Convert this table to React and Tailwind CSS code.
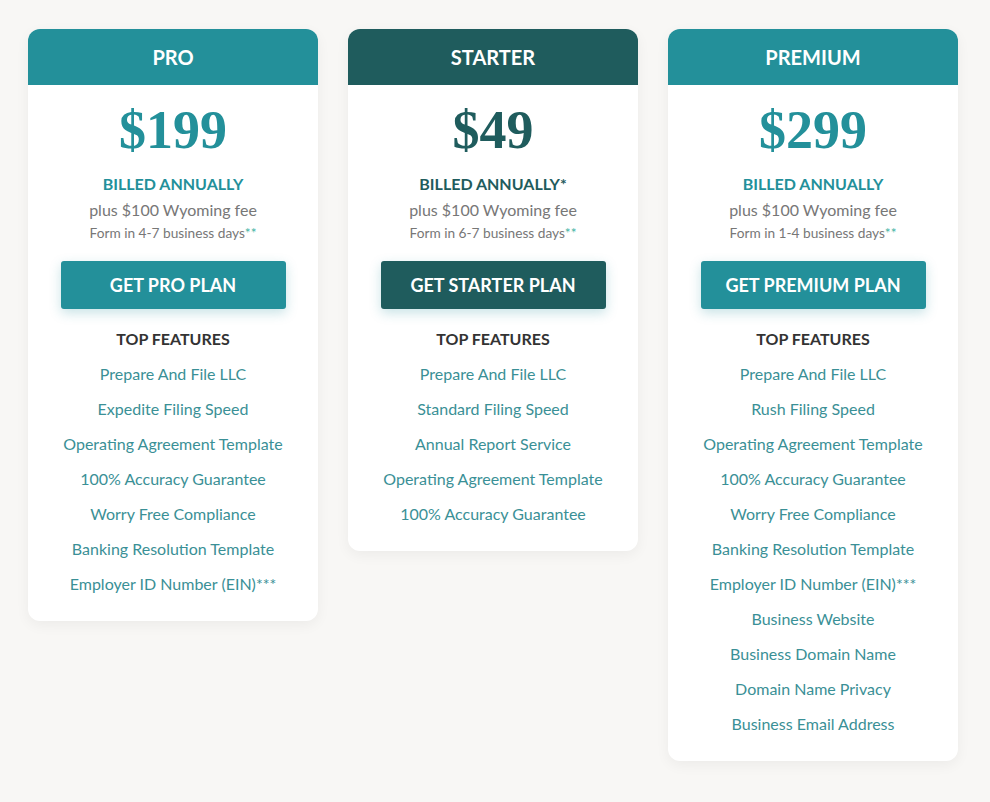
const plans = [
  {
    name: "PRO",
    price: "$199",
    dark: false,
    star: false,
    days: "4-7",
    button: "GET PRO PLAN",
    features: [
      "Prepare And File LLC",
      "Expedite Filing Speed",
      "Operating Agreement Template",
      "100% Accuracy Guarantee",
      "Worry Free Compliance",
      "Banking Resolution Template",
      "Employer ID Number (EIN)***",
    ],
  },
  {
    name: "STARTER",
    price: "$49",
    dark: true,
    star: true,
    days: "6-7",
    button: "GET STARTER PLAN",
    features: [
      "Prepare And File LLC",
      "Standard Filing Speed",
      "Annual Report Service",
      "Operating Agreement Template",
      "100% Accuracy Guarantee",
    ],
  },
  {
    name: "PREMIUM",
    price: "$299",
    dark: false,
    star: false,
    days: "1-4",
    button: "GET PREMIUM PLAN",
    features: [
      "Prepare And File LLC",
      "Rush Filing Speed",
      "Operating Agreement Template",
      "100% Accuracy Guarantee",
      "Worry Free Compliance",
      "Banking Resolution Template",
      "Employer ID Number (EIN)***",
      "Business Website",
      "Business Domain Name",
      "Domain Name Privacy",
      "Business Email Address",
    ],
  },
];

function PlanCard({ plan }) {
  return (
    <div className="w-[290px] bg-white rounded-xl shadow-[0_4px_14px_rgba(0,0,0,0.05)] flex flex-col">
      <div
        className={
          plan.dark
            ? "h-14 rounded-t-xl bg-[#1f5c5d] flex items-center justify-center"
            : "h-14 rounded-t-xl bg-[#23909a] flex items-center justify-center"
        }
      >
        <span className="text-white text-[20px] font-bold">{plan.name}</span>
      </div>

      <div className="flex flex-col items-center text-center pb-5">
        <div
          className={
            plan.dark
              ? "mt-[15px] h-[60px] leading-[60px] text-[54px] font-bold text-[#1f5c5d] font-['Liberation_Serif',serif]"
              : "mt-[15px] h-[60px] leading-[60px] text-[54px] font-bold text-[#23909a] font-['Liberation_Serif',serif]"
          }
        >
          {plan.price}
        </div>
        <div
          className={
            plan.dark
              ? "mt-[11px] leading-[26px] text-[16px] font-bold text-[#1f5c5d]"
              : "mt-[11px] leading-[26px] text-[16px] font-bold text-[#23909a]"
          }
        >
          BILLED ANNUALLY{plan.star ? "*" : ""}
        </div>
        <div className="leading-[26px] text-[16px] text-[#777]">plus $100 Wyoming fee</div>
        <div className="leading-[20px] text-[13.7px] text-[#777]">
          Form in {plan.days} business days<span className="text-[#3db3a3]">**</span>
        </div>

        <button
          className={
            plan.dark
              ? "mt-[18px] w-[225px] h-12 rounded-[3px] bg-[#1f5c5d] text-white text-[18px] font-bold shadow-[0_4px_12px_rgba(35,144,154,0.25)]"
              : "mt-[18px] w-[225px] h-12 rounded-[3px] bg-[#23909a] text-white text-[18px] font-bold shadow-[0_4px_12px_rgba(35,144,154,0.25)]"
          }
        >
          {plan.button}
        </button>

        <div className="mt-[12px] leading-[35px] text-[16px] font-bold text-[#333]">TOP FEATURES</div>
        {plan.features.map((f) => (
          <div key={f} className="leading-[35px] text-[16px] text-[#3a9096]">
            {f}
          </div>
        ))}
      </div>
    </div>
  );
}

export default function App() {
  return (
    <div className="min-h-[802px] w-full bg-[#f8f7f5] font-['Lato',sans-serif]">
      <div className="flex items-start gap-[30px] pl-7 pt-[29px]">
        {plans.map((p) => (
          <PlanCard key={p.name} plan={p} />
        ))}
      </div>
    </div>
  );
}
